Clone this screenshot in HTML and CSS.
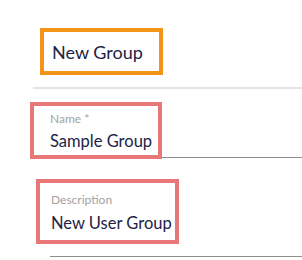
FILE: index.html
```html
<!DOCTYPE html>
<html>
<head>
<meta charset="utf-8">
<link rel="stylesheet" href="styles.css">
</head>
<body>
<div class="page">
  <div class="header">
    <div class="title-box">New Group</div>
  </div>
  <div class="divider"></div>
  <div class="field field-name">
    <div class="box box-name">
      <div class="label">Name *</div>
      <div class="value">Sample Group</div>
    </div>
    <div class="underline underline-name"></div>
  </div>
  <div class="field field-desc">
    <div class="box box-desc">
      <div class="label">Description</div>
      <div class="value">New User Group</div>
    </div>
    <div class="underline underline-desc"></div>
  </div>
</div>
</body>
</html>
```
FILE: styles.css
```css
html, body {
  margin: 0;
  padding: 0;
  background: #ffffff;
}
.page {
  width: 302px;
  height: 260px;
  overflow: hidden;
  font-family: "Lato", "Open Sans", sans-serif;
  color: #1d2345;
  display: flex;
  flex-direction: column;
}
.header {
  padding: 28px 0 0 40px;
}
.title-box {
  box-sizing: border-box;
  width: 123px;
  height: 47px;
  border: 4px solid #f39419;
  display: flex;
  align-items: center;
  padding-left: 8px;
  font-size: 18px;
  white-space: nowrap;
}
.divider {
  margin: 12px 0 0 33px;
  height: 2px;
  background: #e4e4e4;
}
.field {
  display: flex;
  flex-direction: column;
}
.field-name {
  margin: 13px 0 0 30px;
}
.box {
  box-sizing: border-box;
  position: relative;
  background: #ffffff;
  border: 4px solid #e87777;
  display: flex;
  flex-direction: column;
  white-space: nowrap;
}
.box-name {
  width: 132px;
  height: 57px;
  padding: 5px 0 0 16px;
}
.box-desc {
  width: 143px;
  height: 65px;
  padding: 9px 0 0 11px;
}
.label {
  font-size: 12px;
  line-height: 15px;
  color: #a2a2a2;
}
.value {
  font-size: 16.5px;
  line-height: 22px;
  margin-top: 4px;
  color: #1d2345;
}
.box-desc .value {
  margin-top: 5px;
}
.underline {
  height: 1px;
  background: #8f8f8f;
}
.underline-name {
  margin: -2px 0 0 3px;
}
.field-desc {
  margin: 21px 0 0 36px;
}
.underline-desc {
  margin: 12px 0 0 14px;
}
```
